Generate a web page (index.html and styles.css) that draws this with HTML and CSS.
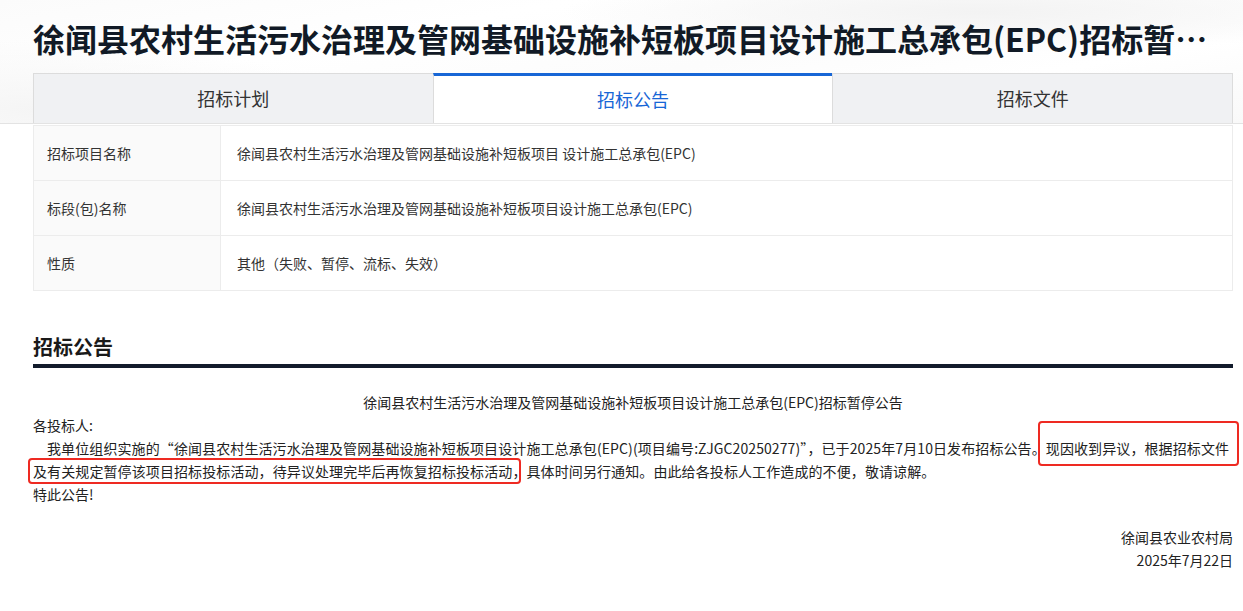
FILE: index.html
```html
<!DOCTYPE html>
<html lang="zh-CN">
<head>
    <meta charset="UTF-8">
    <meta name="viewport" content="width=device-width, initial-scale=1.0">
    <title>招标暂停公告</title>
    <link rel="stylesheet" href="styles.css">
</head>
<body>
    <div class="header">
        <div class="wrap">
            <h1 class="title">徐闻县农村生活污水治理及管网基础设施补短板项目设计施工总承包(EPC)招标暂停公告</h1>
            <div class="tabs">
                <div class="tab">招标计划</div>
                <div class="tab active">招标公告</div>
                <div class="tab">招标文件</div>
            </div>
        </div>
    </div>

    <div class="wrap">
        <table class="info">
            <tr>
                <td class="label">招标项目名称</td>
                <td>徐闻县农村生活污水治理及管网基础设施补短板项目 设计施工总承包(EPC)</td>
            </tr>
            <tr>
                <td class="label">标段(包)名称</td>
                <td>徐闻县农村生活污水治理及管网基础设施补短板项目设计施工总承包(EPC)</td>
            </tr>
            <tr>
                <td class="label">性质</td>
                <td>其他（失败、暂停、流标、失效）</td>
            </tr>
        </table>

        <h2 class="section-title">招标公告</h2>

        <div class="notice">
            <p class="notice-title">徐闻县农村生活污水治理及管网基础设施补短板项目设计施工总承包(EPC)招标暂停公告</p>
            <p>各投标人:</p>
            <p class="indent">我单位组织实施的“徐闻县农村生活污水治理及管网基础设施补短板项目设计施工总承包(EPC)(项目编号:ZJGC20250277)”，已于2025年7月10日发布招标公告。现因收到异议，根据招标文件及有关规定暂停该项目招标投标活动，待异议处理完毕后再恢复招标投标活动，具体时间另行通知。由此给各投标人工作造成的不便，敬请谅解。</p>
            <p>特此公告!</p>
            <div class="sign">
                <p>徐闻县农业农村局</p>
                <p>2025年7月22日</p>
            </div>
            <!-- 标注框 -->
            <div class="mark mark-1"></div>
            <div class="mark mark-2"></div>
        </div>
    </div>
</body>
</html>
```

FILE: styles.css
```css
body {
    margin: 0;
    padding: 0;
    font-family: "Noto Sans CJK SC", "Noto Sans", sans-serif;
    color: #333;
    background: #fff;
}

.wrap {
    width: 1200px;
    margin-left: 33px;
}

.header {
    background:
        radial-gradient(ellipse 420px 40px at 980px 12px, #f3f3f3, rgba(255,255,255,0)),
        radial-gradient(ellipse 300px 70px at 40px 110px, #f5f5f5, rgba(255,255,255,0)),
        linear-gradient(170deg, #fbfbfb 0%, #fff 30%, #fcfcfc 55%, #fff 75%, #f9f9f9 100%);
    border-bottom: 1px solid #e3e3e3;
}

.title {
    margin: 0;
    padding-top: 18px;
    height: 40px;
    line-height: 40px;
    font-size: 32px;
    font-weight: bold;
    color: #111a26;
    white-space: nowrap;
    overflow: hidden;
    text-overflow: ellipsis;
    margin-bottom: 15px;
}

.tabs {
    display: flex;
}

.tab {
    flex: 1;
    height: 49px;
    line-height: 49px;
    text-align: center;
    font-size: 18px;
    color: #333;
    background: #f0f1f3;
    border-top: 1px solid #dcdcdc;
    border-left: 1px solid #dcdcdc;
}

.tab:last-child {
    border-right: 1px solid #dcdcdc;
}

.tab.active {
    background: #fff;
    color: #1766d6;
    border-top: 3px solid #1766d6;
    height: 47px;
    line-height: 47px;
}

.info {
    width: 100%;
    margin-top: 1px;
    border-collapse: collapse;
    font-size: 14px;
}

.info td {
    height: 54px;
    padding: 0 16px;
    border: 1px solid #ececec;
}

.info td.label {
    width: 157px;
    padding-left: 13px;
    background: #fafafa;
}

.section-title {
    margin: 42px 0 0;
    font-size: 20px;
    line-height: 28px;
    font-weight: bold;
    color: #1a1a1a;
    padding-bottom: 3px;
    border-bottom: 4px solid #121b2b;
}

.notice {
    position: relative;
    padding-top: 23px;
    font-size: 14px;
    line-height: 23px;
    color: #222;
}

.notice p {
    margin: 0;
}

.notice-title {
    text-align: center;
}

.indent {
    text-indent: 14px;
    letter-spacing: 0.1px;
}

.sign {
    margin-top: 20px;
    text-align: right;
}

.mark {
    position: absolute;
    border: 2px solid #ee2a22;
    border-radius: 4px;
}

.mark-1 {
    left: 1005px;
    top: 53px;
    width: 197px;
    height: 41px;
}

.mark-2 {
    left: -5px;
    top: 90px;
    width: 489px;
    height: 22px;
}
```
